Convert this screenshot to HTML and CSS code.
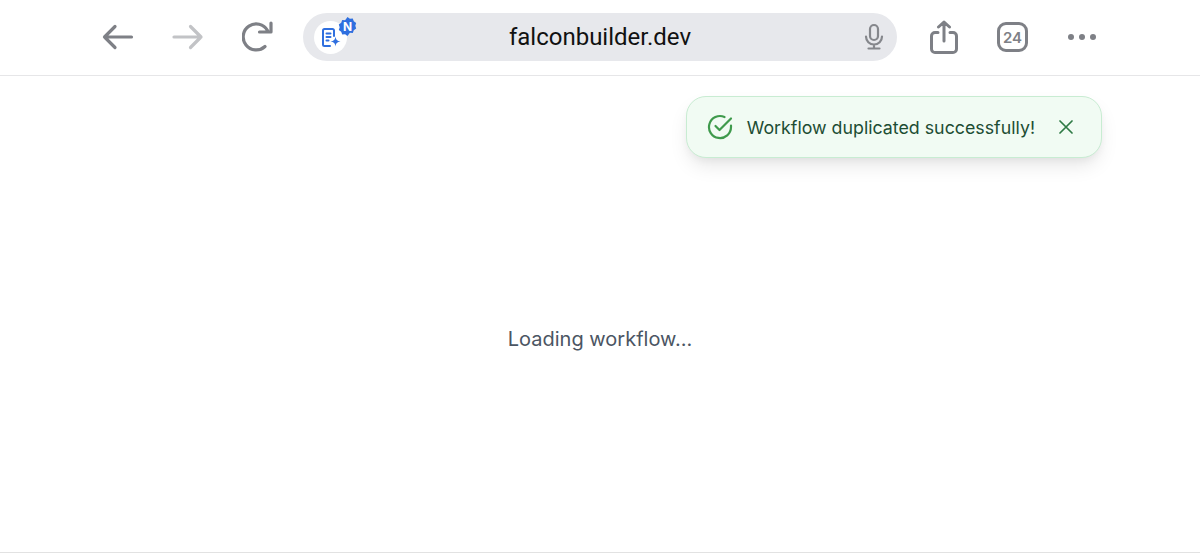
FILE: index.html
```html
<!DOCTYPE html>
<html lang="en">
<head>
  <meta charset="UTF-8">
  <meta name="viewport" content="width=device-width, initial-scale=1.0">
  <title>falconbuilder.dev</title>
  <link rel="stylesheet" href="styles.css">
</head>
<body>

  <header class="toolbar">
    <div class="nav-group">
      <svg class="icon" width="32" height="32" viewBox="0 0 32 32" fill="none" stroke="#7e8086" stroke-width="3.200" stroke-linecap="round" stroke-linejoin="round"><path d="M2.500 16H29.500M13 5.500 2.500 16 13 26.500"/></svg>
      <svg class="icon" width="32" height="32" viewBox="0 0 32 32" fill="none" stroke="#c2c3c6" stroke-width="3.200" stroke-linecap="round" stroke-linejoin="round"><path d="M2 16h27M18.500 5.500 29 16 18.500 26.500"/></svg>
      <svg class="icon" width="32" height="32" viewBox="0 0 32 32" fill="none" stroke="#7e8086" stroke-width="3.200" stroke-linecap="round" stroke-linejoin="round"><path d="M25.500 9.500A13 13 0 1 0 23 25.500M17.500 11H29V2"/></svg>
    </div>

    <div class="address-bar">
      <span class="page-badge">
        <svg width="22" height="22" viewBox="0 0 22 22" fill="none" stroke="#2f6fdf" stroke-width="2" stroke-linecap="round" stroke-linejoin="round"><path d="M10 19H4.500a1.500 1.500 0 0 1-1.500-1.500v-14A1.500 1.500 0 0 1 4.500 2h8A1.500 1.500 0 0 1 14 3.500V9M6.500 6.500h4M6.500 10h4M6.500 13.500h2"/><path d="M15.500 9.500c.6 3.500 1.500 4.400 5 5-3.500.6-4.400 1.500-5 5-.6-3.500-1.500-4.400-5-5 3.500-.6 4.400-1.500 5-5z" fill="#2f6fdf" stroke="none"/></svg>
        <span class="new-tag">
          <svg width="19" height="19" viewBox="0 0 19 19"><path d="M9.500 0l2.400 1.700 2.900-.2 1 2.700 2.400 1.700-.9 2.800.9 2.800-2.400 1.700-1 2.700-2.900-.2L9.500 19l-2.400-1.700-2.900.2-1-2.700L.8 13.100l.9-2.800-.9-2.800 2.400-1.700 1-2.700 2.900.2z" fill="#2f6fdf"/></svg>
          <span class="new-letter">N</span>
        </span>
      </span>
      <span class="url">falconbuilder.dev</span>
      <svg class="mic" width="20" height="28" viewBox="0 0 20 28" fill="none" stroke="#85878c" stroke-width="2.200" stroke-linecap="round"><rect x="6" y="2" width="8" height="15" rx="4"/><path d="M2 13.500a8 8 0 0 0 16 0M10 21.500V25M4.500 25.500h11"/></svg>
    </div>

    <div class="action-group">
      <svg class="icon" width="28" height="34" viewBox="0 0 28 34" fill="none" stroke="#7e8086" stroke-width="3" stroke-linecap="round" stroke-linejoin="round"><path d="M8 12.500H5a3.500 3.500 0 0 0-3.500 3.500v13A3.500 3.500 0 0 0 5 32.500h18a3.500 3.500 0 0 0 3.500-3.500V16a3.500 3.500 0 0 0-3.500-3.500h-3M14 21V2M8.500 7 14 2l5.500 5"/></svg>
      <span class="tab-count">24</span>
      <span class="more-dots"><i></i><i></i><i></i></span>
    </div>
  </header>

  <main class="page">
    <div class="toast">
      <svg width="26" height="26" viewBox="0 0 26 26" fill="none" stroke="#3f9a4c" stroke-width="2.200" stroke-linecap="round" stroke-linejoin="round"><path d="M24 11.500V13a11 11 0 1 1-6.500-10"/><path d="M8.500 12l4 4L24 4.500"/></svg>
      <span class="toast-text">Workflow duplicated successfully!</span>
      <svg class="toast-close" width="14" height="14" viewBox="0 0 14 14" fill="none" stroke="#2f7a45" stroke-width="1.700" stroke-linecap="round"><path d="M1 1l12 12M13 1 1 13"/></svg>
    </div>
    <p class="loading">Loading workflow...</p>
  </main>

</body>
</html>
```

FILE: styles.css
```css
html, body { margin: 0; height: 100%; }
body {
  display: flex;
  flex-direction: column;
  height: 553px;
  overflow: hidden;
  background: #fff;
  font-family: Inter, "Liberation Sans", sans-serif;
  box-sizing: border-box;
  border-bottom: 1px solid #e2e2e2;
}

.toolbar {
  display: flex;
  align-items: center;
  height: 74px;
  padding: 0 0 1px 102px;
  border-bottom: 1px solid #e6e6e8;
  flex-shrink: 0;
}
.icon { display: block; flex-shrink: 0; }
.nav-group { display: flex; align-items: center; gap: 38px; }

.address-bar {
  position: relative;
  display: flex;
  align-items: center;
  justify-content: center;
  width: 594px;
  height: 48px;
  margin-left: 29px;
  border-radius: 24px;
  background: #e7e8ec;
}
.url {
  font-family: Roboto, sans-serif;
  font-size: 24px;
  color: #111;
}
.page-badge {
  position: absolute;
  left: 11px;
  top: 8px;
  display: flex;
  align-items: center;
  justify-content: center;
  width: 33px;
  height: 33px;
  border-radius: 50%;
  background: #fff;
}
.new-tag {
  position: absolute;
  left: 24px;
  top: -4px;
  width: 19px;
  height: 19px;
}
.new-tag svg { display: block; }
.new-letter {
  position: absolute;
  inset: 0;
  text-align: center;
  font-size: 12px;
  font-weight: 700;
  line-height: 19px;
  color: #fff;
}
.mic { position: absolute; right: 13px; top: 10px; }

.action-group {
  display: flex;
  align-items: center;
  margin-left: 33px;
}
.tab-count {
  display: flex;
  align-items: center;
  justify-content: center;
  width: 31px;
  height: 30px;
  margin-left: 39px;
  box-sizing: border-box;
  border: 3px solid #7e8086;
  border-radius: 9px;
  font-size: 15px;
  font-weight: 600;
  color: #7e8086;
}
.more-dots { display: flex; gap: 5px; margin-left: 40px; }
.more-dots i {
  display: block;
  width: 6px;
  height: 6px;
  border-radius: 50%;
  background: #7e8086;
}

.page {
  position: relative;
  flex: 1;
  display: flex;
  align-items: center;
  justify-content: center;
  padding-top: 50px;
}
.loading {
  margin: 0;
  font-size: 20px;
  color: #4b5563;
}

.toast {
  position: absolute;
  top: 20px;
  right: 98px;
  display: flex;
  align-items: center;
  height: 62px;
  box-sizing: border-box;
  padding: 0 28px 0 20px;
  border: 1px solid #c8ecd2;
  border-radius: 20px;
  background: #f1fbf3;
  box-shadow: 0 10px 20px -3px rgba(0,0,0,0.1), 0 4px 8px -2px rgba(0,0,0,0.05);
}
.toast-text {
  margin-left: 14px;
  font-size: 17.800px;
  color: #1d4d33;
}
.toast-close { margin-left: 24px; }
```
